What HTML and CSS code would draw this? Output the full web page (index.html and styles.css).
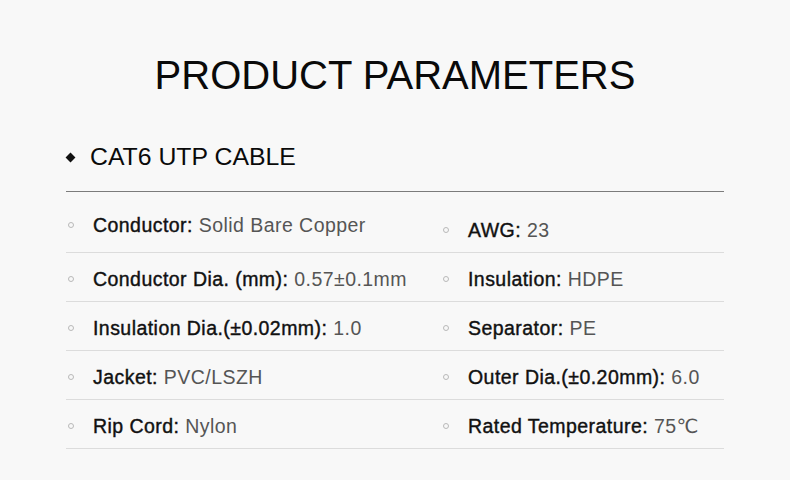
FILE: index.html
```html
<!DOCTYPE html>
<html lang="en">
<head>
<meta charset="utf-8">
<title>Product Parameters</title>
<link rel="stylesheet" href="styles.css">
</head>
<body>
<main class="page">
  <h1 class="title">PRODUCT PARAMETERS</h1>
  <h2 class="subtitle"><span class="diamond"></span>CAT6 UTP CABLE</h2>
  <div class="specs">
    <div class="cell cell-high"><span class="dot"></span><span class="label">Conductor:</span>&nbsp;<span class="value">Solid Bare Copper</span></div>
    <div class="cell cell-low"><span class="dot"></span><span class="label">AWG:</span>&nbsp;<span class="value">23</span></div>
    <div class="cell"><span class="dot"></span><span class="label">Conductor Dia. (mm):</span>&nbsp;<span class="value">0.57±0.1mm</span></div>
    <div class="cell"><span class="dot"></span><span class="label">Insulation:</span>&nbsp;<span class="value">HDPE</span></div>
    <div class="cell"><span class="dot"></span><span class="label">Insulation Dia.(±0.02mm):</span>&nbsp;<span class="value">1.0</span></div>
    <div class="cell"><span class="dot"></span><span class="label">Separator:</span>&nbsp;<span class="value">PE</span></div>
    <div class="cell"><span class="dot"></span><span class="label">Jacket:</span>&nbsp;<span class="value">PVC/LSZH</span></div>
    <div class="cell"><span class="dot"></span><span class="label">Outer Dia.(±0.20mm):</span>&nbsp;<span class="value">6.0</span></div>
    <div class="cell"><span class="dot"></span><span class="label">Rip Cord:</span>&nbsp;<span class="value">Nylon</span></div>
    <div class="cell"><span class="dot"></span><span class="label">Rated Temperature:</span>&nbsp;<span class="value">75℃</span></div>
  </div>
</main>
</body>
</html>
```

FILE: styles.css
```css
html, body {
  margin: 0;
  padding: 0;
  background: #f8f8f8;
}

body {
  width: 790px;
  height: 480px;
  overflow: hidden;
  font-family: "Liberation Sans", Arial, "DejaVu Sans", sans-serif;
  color: #111;
}

.page {
  padding: 55px 66px 0 66px;
}

.title {
  margin: 0;
  font-size: 40px;
  line-height: 40px;
  font-weight: 400;
  text-align: center;
  color: #0a0a0a;
}

.subtitle {
  margin: 50px 0 0 0;
  padding-bottom: 22px;
  border-bottom: 1px solid #7c7c7c;
  display: flex;
  align-items: center;
  gap: 16px;
  font-size: 24.8px;
  line-height: 24px;
  font-weight: 400;
  color: #0a0a0a;
}

.diamond {
  width: 7px;
  height: 7px;
  margin-left: 1px;
  background: #111;
  transform: rotate(45deg);
  flex: none;
}

.specs {
  display: grid;
  grid-template-columns: 375px 1fr;
  grid-template-rows: 61px;
  grid-auto-rows: 49px;
}

.cell {
  display: flex;
  align-items: center;
  padding: 3px 0 0 2px;
  border-bottom: 1px solid #dcdcdc;
  font-size: 19.5px;
  line-height: 20px;
  letter-spacing: 0.45px;
  white-space: nowrap;
  box-sizing: border-box;
}

.cell-high {
  padding-top: 5px;
}

.cell-low {
  padding-top: 16px;
}

.dot {
  width: 6px;
  height: 6px;
  border: 1px solid #b9b9b9;
  border-radius: 50%;
  box-sizing: border-box;
  margin-right: 19px;
  flex: none;
}

.label {
  color: #111;
  -webkit-text-stroke: 0.4px #111;
}

.value {
  color: #555;
}
```
